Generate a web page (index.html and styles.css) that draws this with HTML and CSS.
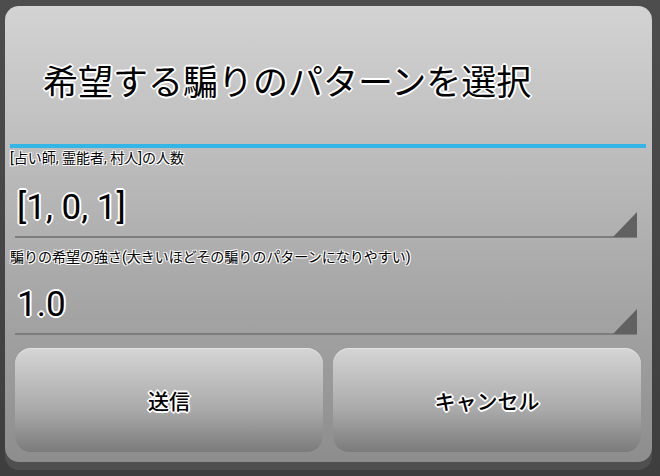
FILE: index.html
```html
<!DOCTYPE html>
<html lang="ja">
<head>
    <meta charset="UTF-8">
    <meta name="viewport" content="width=device-width, initial-scale=1.0">
    <title>希望する騙りのパターンを選択</title>
    <link rel="stylesheet" href="styles.css">
</head>
<body>

<div class="dialog">
    <div class="title">希望する騙りのパターンを選択</div>
    <div class="divider"></div>

    <div class="content">
        <div class="label">[占い師, 霊能者, 村人]の人数</div>
        <div class="spinner spinner-first">
            <span class="value">[1, 0, 1]</span>
            <span class="arrow"></span>
        </div>

        <div class="label label-second">騙りの希望の強さ(大きいほどその騙りのパターンになりやすい)</div>
        <div class="spinner spinner-second">
            <span class="value">1.0</span>
            <span class="arrow"></span>
        </div>
    </div>

    <div class="buttons">
        <button class="btn">送信</button>
        <button class="btn">キャンセル</button>
    </div>
</div>

</body>
</html>
```

FILE: styles.css
```css
body {
    margin: 0;
    padding: 0;
    height: 476px;
    overflow: hidden;
    background: linear-gradient(#4d4d4d, #3e3e3e);
    font-family: Roboto, "Noto Sans CJK JP", sans-serif;
    color: #000;
}

.dialog {
    box-sizing: border-box;
    height: 456px;
    margin: 6px 8px 0 5px;
    border-radius: 14px;
    background: linear-gradient(#d3d3d3, #8d8d8d);
    box-shadow: 0 8px 0 #4f4f4f;
    display: flex;
    flex-direction: column;
}

.title {
    height: 138px;
    box-sizing: border-box;
    padding: 9px 0 0 38px;
    display: flex;
    align-items: center;
    font-size: 35px;
    text-shadow: -1px -1px 0 #fff, 1px -1px 0 #fff, -1px 1px 0 #fff, 1px 1px 0 #fff,
                 0 -2px 0 #fff, 0 2px 0 #fff, -2px 0 0 #fff, 2px 0 0 #fff;
}

.divider {
    height: 4px;
    margin: 0 6px 0 5px;
    background-color: #33b5e5;
}

.content {
    padding: 0 15px 0 5px;
}

.label {
    font-size: 14px;
    line-height: 20px;
    height: 20px;
    white-space: nowrap;
    text-shadow: -1px -1px 0 #fff, 1px -1px 0 #fff, -1px 1px 0 #fff, 1px 1px 0 #fff;
}

.label-second {
    margin-top: 9px;
}

.spinner {
    position: relative;
    margin-left: 5px;
    border-bottom: 2px solid #7d7d7d;
}

.spinner-first {
    height: 68px;
}

.spinner-second {
    height: 66px;
}

.value {
    display: block;
    padding-left: 2px;
    font-size: 35px;
    line-height: 44px;
    text-shadow: -1px -1px 0 #fff, 1px -1px 0 #fff, -1px 1px 0 #fff, 1px 1px 0 #fff,
                 0 -2px 0 #fff, 0 2px 0 #fff, -2px 0 0 #fff, 2px 0 0 #fff;
}

.spinner-first .value {
    padding-top: 18px;
}

.spinner-second .value {
    padding-top: 16px;
}

.arrow {
    position: absolute;
    right: 0;
    bottom: -1px;
    width: 24px;
    height: 25px;
    background-color: #616161;
    clip-path: polygon(100% 0, 100% 100%, 0 100%);
}

.buttons {
    display: grid;
    grid-template-columns: 1fr 1fr;
    gap: 10px;
    padding: 0 11px 0 10px;
    margin-top: 13px;
}

.btn {
    height: 104px;
    border: none;
    border-radius: 16px;
    background: linear-gradient(#d5d5d5, #a9a9a9 60%, #7b7b7b);
    box-shadow: inset 0 1px 0 rgba(255, 255, 255, 0.35);
    font-family: Roboto, "Noto Sans CJK JP", sans-serif;
    font-size: 21px;
    font-weight: 500;
    color: #000;
    padding: 0;
    text-shadow: -1px -1px 0 #fff, 1px -1px 0 #fff, -1px 1px 0 #fff, 1px 1px 0 #fff,
                 0 -2px 0 #fff, 0 2px 0 #fff, -2px 0 0 #fff, 2px 0 0 #fff;
}
```
